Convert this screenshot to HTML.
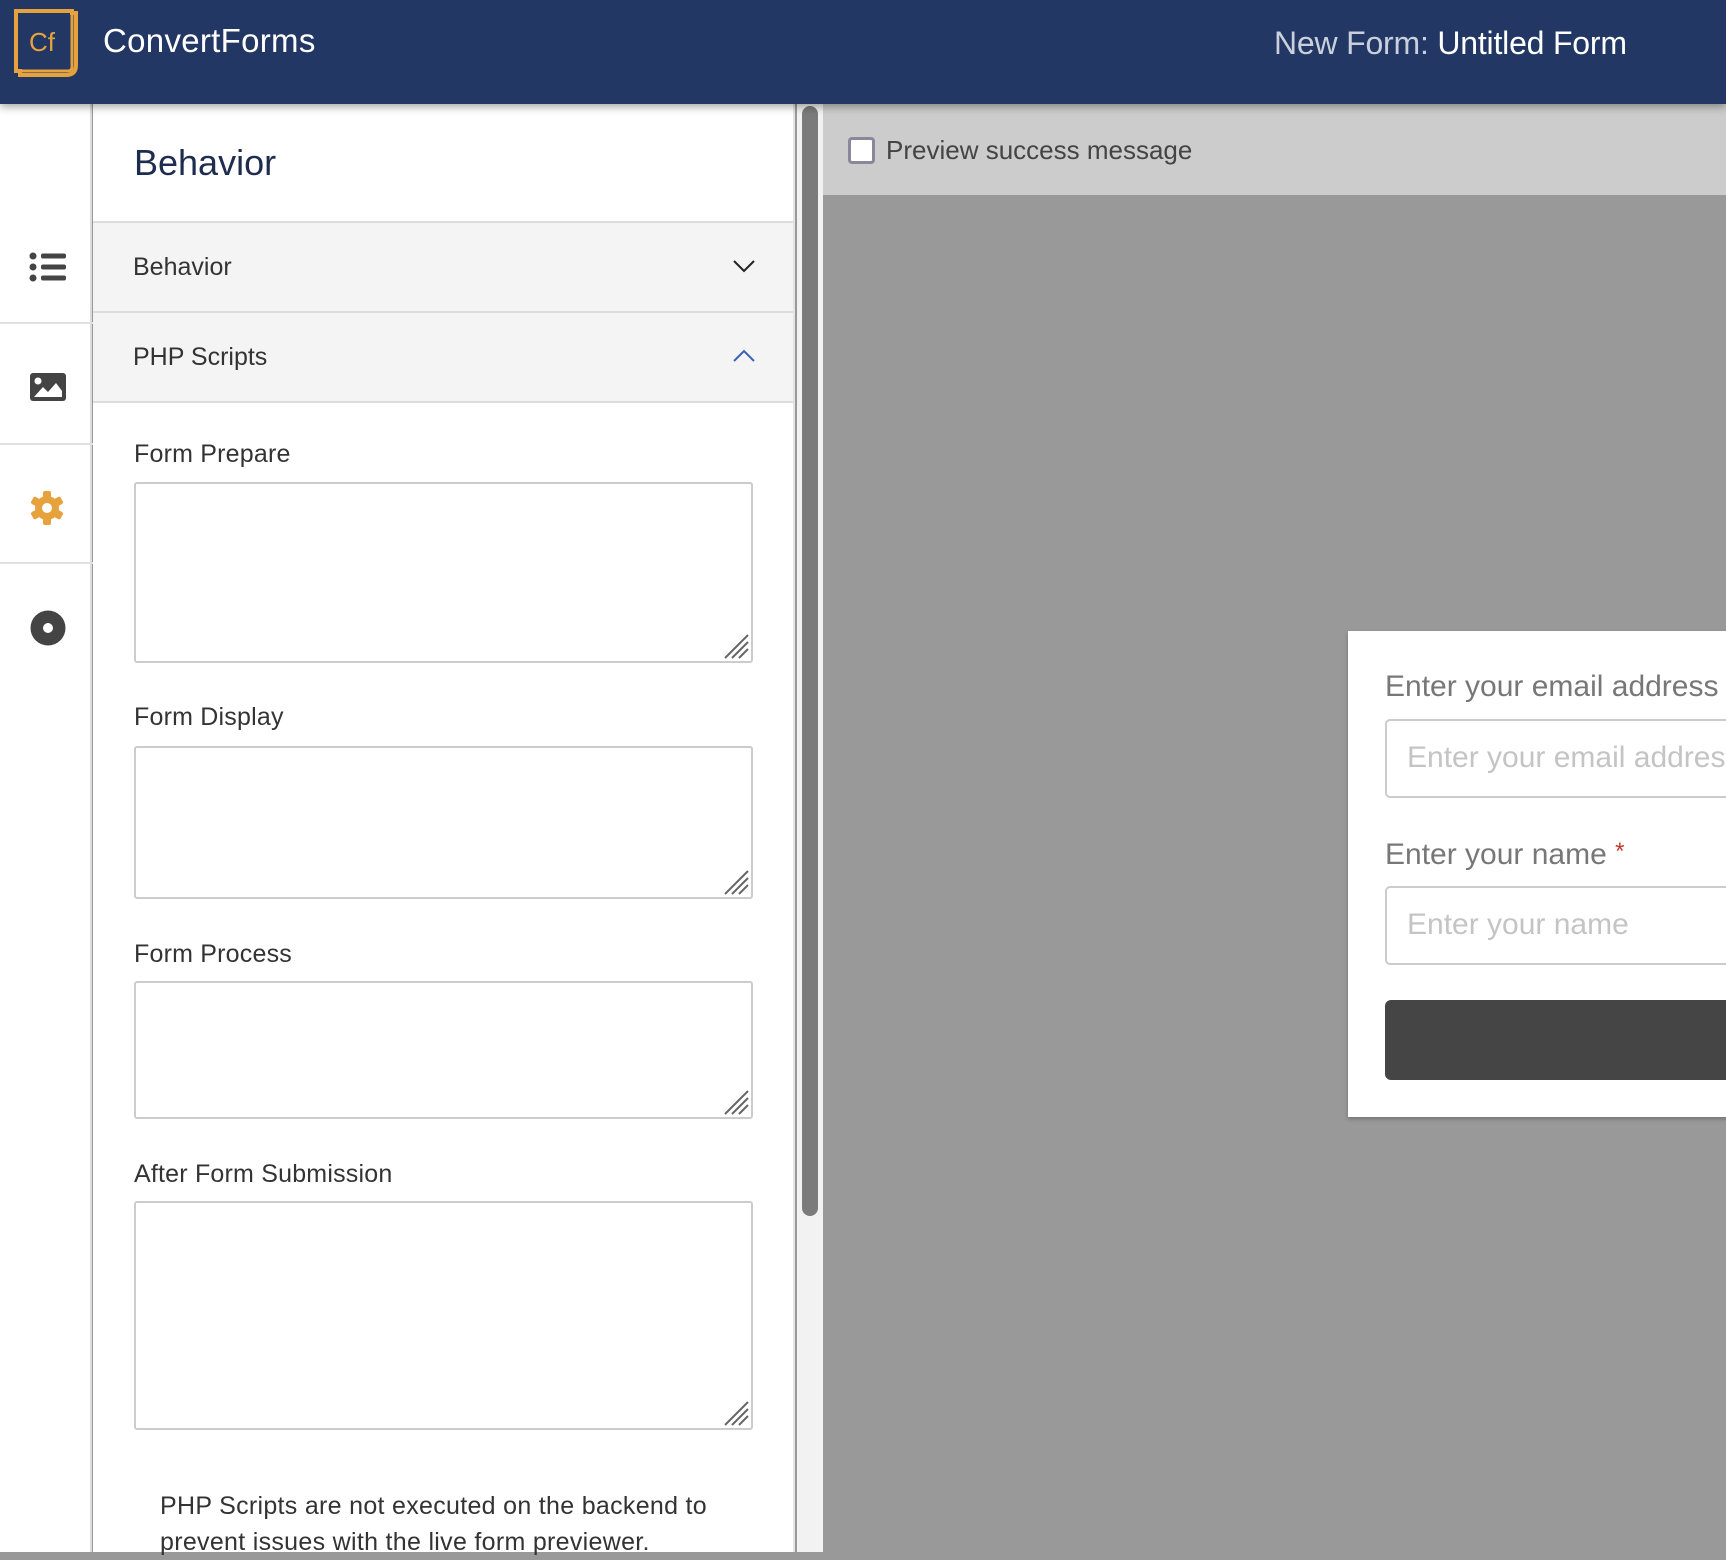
<!DOCTYPE html>
<html><head><meta charset="utf-8">
<style>
*{box-sizing:border-box;margin:0;padding:0}
body{width:1726px;height:1552px;overflow:hidden;font-family:"Liberation Sans",sans-serif;background:#999;position:relative}
.hdr{position:absolute;left:0;top:0;width:1726px;height:104px;background:#223763;box-shadow:0 3px 8px rgba(0,0,0,.35);z-index:5}
.logo{position:absolute;left:14px;top:9px;width:68px;height:69px}
.brand{position:absolute;left:103px;top:22px;color:#fff;font-size:33px;letter-spacing:.3px}
.title{position:absolute;left:1274px;top:25px;font-size:32px;color:#c9cfdc;letter-spacing:-.2px}
.title b{font-weight:normal;color:#fff}
.side{position:absolute;left:0;top:104px;width:92px;height:1448px;background:#fff;border-right:2px solid #dcdcdc}
.div{position:absolute;left:0;width:101px;height:2px;background:#dfe1e5}
.ico{position:absolute}
.panel{position:absolute;left:93px;top:104px;width:702px;height:1448px;background:#fff;border-right:2px solid #e4e4e4}
.ph{position:absolute;left:41px;top:38px;font-size:36px;color:#1e2d4f}
.acc{position:absolute;left:0;width:700px;height:90px;background:#f4f4f4;border-top:2px solid #ddd}
.acc span{position:absolute;left:40px;top:30px;font-size:25px;color:#333}
.acc svg{position:absolute;left:640px;top:36px}
.lbl{position:absolute;left:41px;font-size:25px;color:#333;letter-spacing:.2px}
.ta{position:absolute;left:41px;width:619px;border:2px solid #ccc;border-radius:3px;background:#fff}
.ta svg{position:absolute;right:2px;bottom:2px}
.note{position:absolute;left:67px;top:1384px;font-size:25px;line-height:36px;color:#333;width:620px;letter-spacing:.3px}
.sb{position:absolute;left:802px;top:106px;width:16px;height:1110px;background:#7b7b7b;border-radius:8px}
.sbt{position:absolute;left:797px;top:104px;width:26px;height:1448px;background:#f2f2f2}
.pbar{position:absolute;left:823px;top:104px;width:903px;height:91px;background:#ccc}
.cb{position:absolute;left:848px;top:137px;width:27px;height:27px;border:3px solid #8a8799;border-radius:4px;background:#fff}
.pt{position:absolute;left:886px;top:135px;font-size:26px;color:#444}
.card{position:absolute;left:1348px;top:631px;width:400px;height:486px;background:#fff;box-shadow:0 2px 4px rgba(0,0,0,.25)}
.fl{position:absolute;left:37px;font-size:30px;color:#777}
.fi{position:absolute;left:37px;width:400px;height:79px;border:2px solid #ccc;border-radius:5px;font-size:30px;color:#c4c4c4;padding:20px 0 0 20px;white-space:nowrap}
.btn{position:absolute;left:37px;top:369px;width:400px;height:80px;background:#454545;border-radius:6px}
</style></head><body>
<div class="hdr">
 <svg class="logo" viewBox="0 0 68 69"><path d="M2 2H58V4H62V56Q62 66 52 66H6V62H2Z" fill="none" stroke="#e6a23c" stroke-width="4"/><path d="M58 4V58Q58 62 54 62H6" fill="none" stroke="#e6a23c" stroke-width="3"/><text x="15" y="42" font-family="Liberation Sans" font-size="26" fill="#e6a23c">Cf</text></svg>
 <div class="brand">ConvertForms</div>
 <div class="title">New Form: <b>Untitled Form</b></div>
</div>
<div class="side">
 <svg class="ico" style="left:29px;top:148px" width="38" height="30" viewBox="0 0 38 30"><circle cx="4" cy="4" r="3.5" fill="#444"/><circle cx="4" cy="15" r="3.5" fill="#444"/><circle cx="4" cy="26" r="3.5" fill="#444"/><rect x="12" y="1.5" width="25" height="5" rx="2" fill="#444"/><rect x="12" y="12.5" width="25" height="5" rx="2" fill="#444"/><rect x="12" y="23.5" width="25" height="5" rx="2" fill="#444"/></svg>
 <div class="div" style="top:218px"></div>
 <svg class="ico" style="left:30px;top:269px" width="36" height="28" viewBox="0 0 36 28"><rect width="36" height="28" rx="3" fill="#444"/><circle cx="8" cy="8" r="3.5" fill="#fff"/><path d="M4 24L13 14L18 19L26 10L32 18V24Z" fill="#fff"/></svg>
 <div class="div" style="top:339px"></div>
 <svg class="ico" style="left:30px;top:386px" width="34" height="36" viewBox="0 0 34 36"><g fill="#e6a23c"><circle cx="17" cy="18" r="12"/><rect x="13" y="1" width="8" height="34" rx="2"/><rect x="13" y="1" width="8" height="34" rx="2" transform="rotate(60 17 18)"/><rect x="13" y="1" width="8" height="34" rx="2" transform="rotate(120 17 18)"/></g><circle cx="17" cy="18" r="5" fill="#fff"/></svg>
 <div class="div" style="top:458px"></div>
 <svg class="ico" style="left:30px;top:506px" width="36" height="36" viewBox="0 0 36 36"><circle cx="18" cy="18" r="17.5" fill="#444"/><circle cx="18" cy="18" r="5" fill="#fff"/></svg>
</div>
<div class="panel">
 <div class="ph">Behavior</div>
 <div class="acc" style="top:117px"><span>Behavior</span><svg width="22" height="14" viewBox="0 0 22 14"><path d="M1 2L11 12L21 2" fill="none" stroke="#222" stroke-width="2"/></svg></div>
 <div class="acc" style="top:207px;border-bottom:2px solid #ddd;height:92px"><span>PHP Scripts</span><svg width="22" height="14" viewBox="0 0 22 14"><path d="M1 12L11 2L21 12" fill="none" stroke="#3a63b0" stroke-width="2"/></svg></div>
 <div class="lbl" style="top:336px">Form Prepare</div>
 <div class="ta" style="top:378px;height:181px"><svg width="26" height="26" viewBox="0 0 26 26"><path d="M2 25L25 2M9 25L25 9M16 25L25 16" stroke="#666" stroke-width="2"/></svg></div>
 <div class="lbl" style="top:599px">Form Display</div>
 <div class="ta" style="top:642px;height:153px"><svg width="26" height="26" viewBox="0 0 26 26"><path d="M2 25L25 2M9 25L25 9M16 25L25 16" stroke="#666" stroke-width="2"/></svg></div>
 <div class="lbl" style="top:836px">Form Process</div>
 <div class="ta" style="top:877px;height:138px"><svg width="26" height="26" viewBox="0 0 26 26"><path d="M2 25L25 2M9 25L25 9M16 25L25 16" stroke="#666" stroke-width="2"/></svg></div>
 <div class="lbl" style="top:1056px">After Form Submission</div>
 <div class="ta" style="top:1097px;height:229px"><svg width="26" height="26" viewBox="0 0 26 26"><path d="M2 25L25 2M9 25L25 9M16 25L25 16" stroke="#666" stroke-width="2"/></svg></div>
 <div class="note">PHP Scripts are not executed on the backend to prevent issues with the live form previewer.</div>
</div>
<div class="sbt"></div>
<div class="sb"></div>
<div class="pbar"></div>
<div class="cb"></div>
<div class="pt">Preview success message</div>
<div class="card">
 <div class="fl" style="top:39px">Enter your email address</div>
 <div class="fi" style="top:88px">Enter your email address</div>
 <div class="fl" style="top:207px">Enter your name <span style="color:#c0392b;font-size:24px;vertical-align:top">*</span></div>
 <div class="fi" style="top:255px">Enter your name</div>
 <div class="btn"></div>
</div>
</body></html>
